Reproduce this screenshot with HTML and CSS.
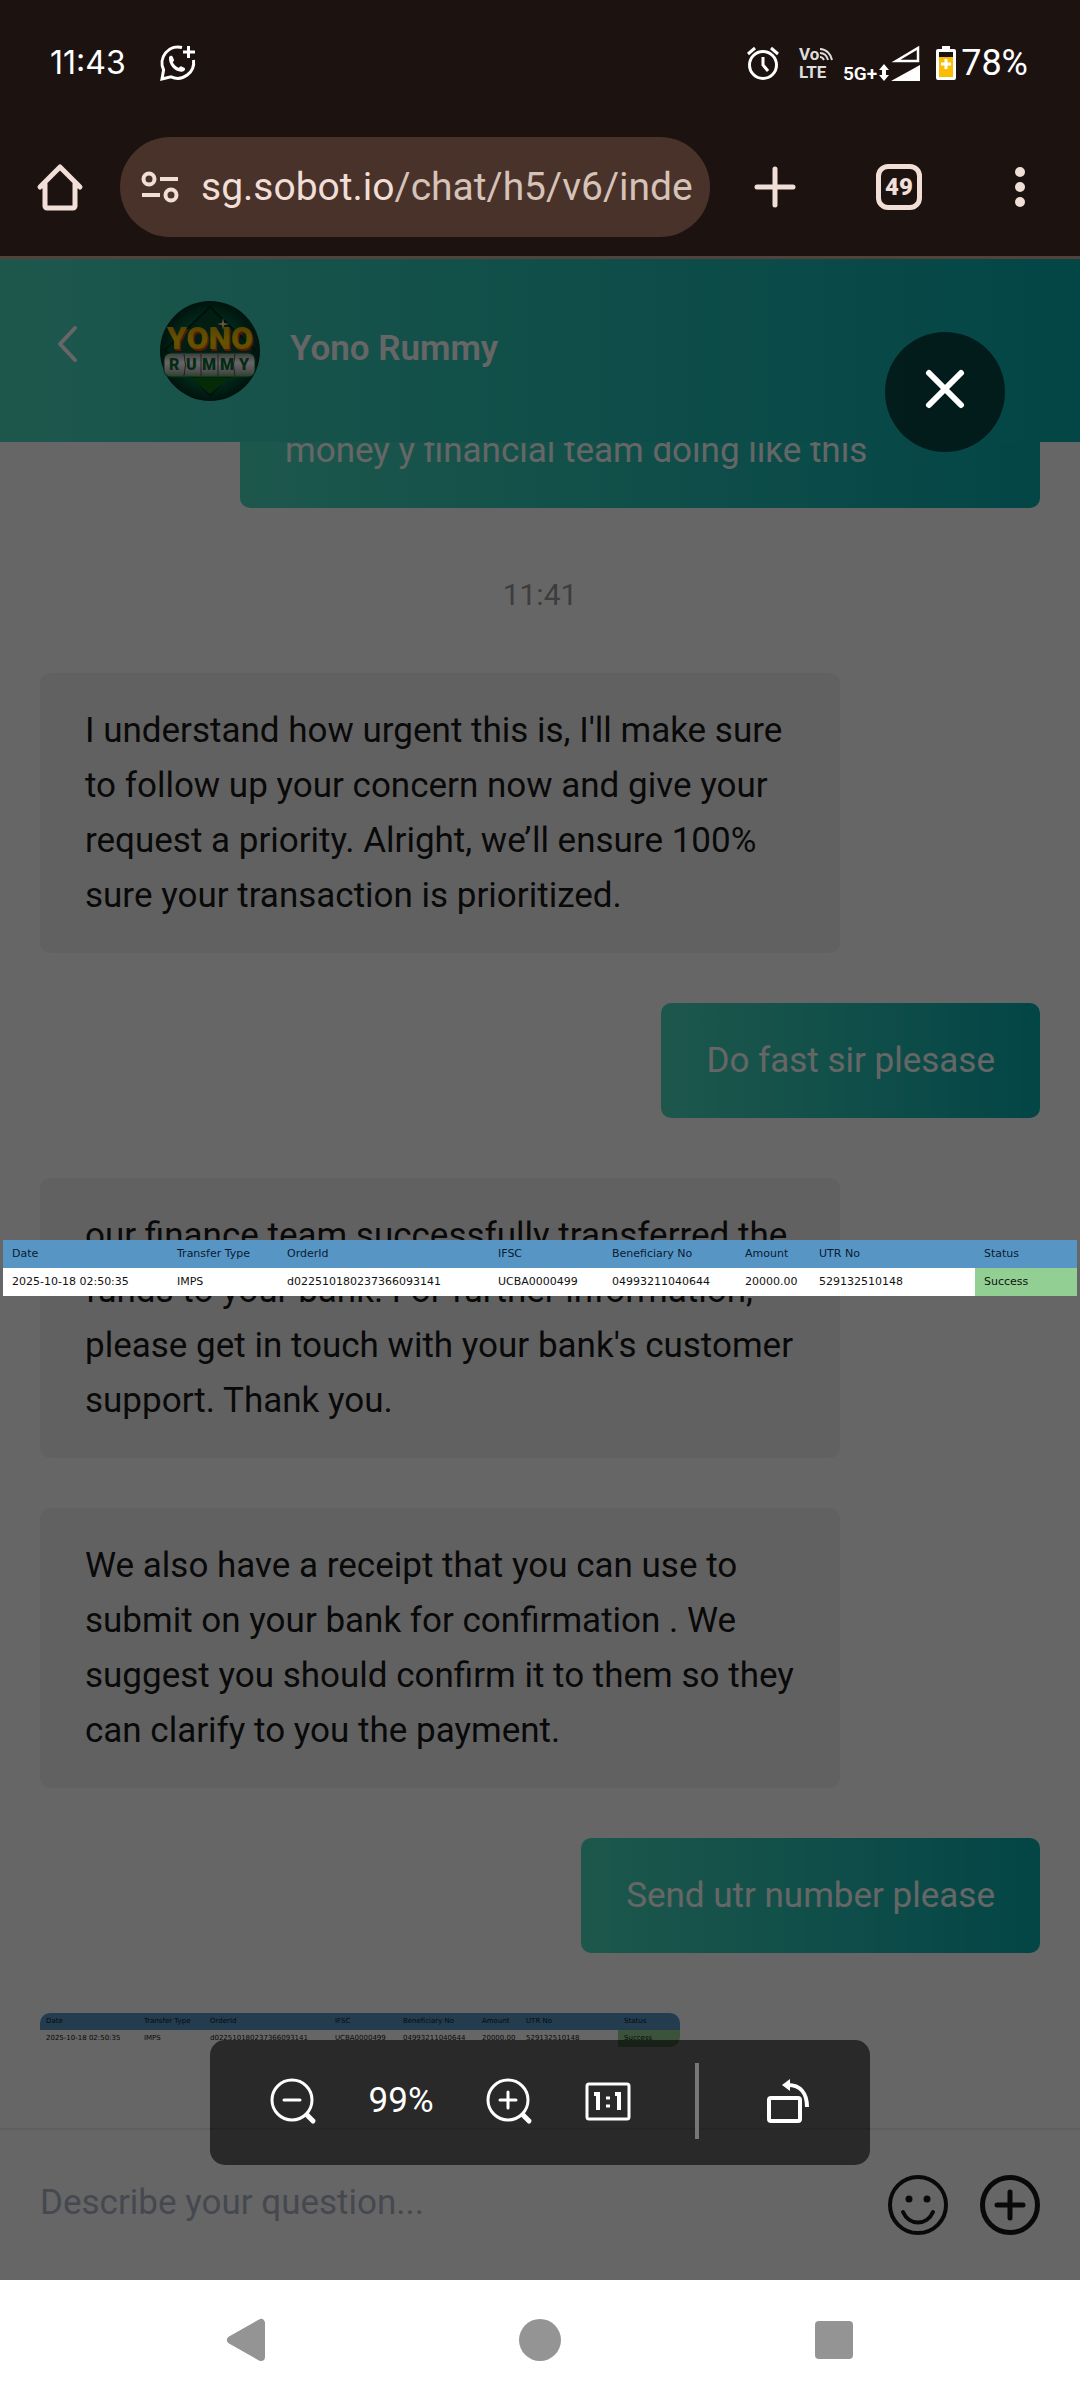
FILE: index.html
```html
<!DOCTYPE html>
<html lang="en">

<head>
    <meta charset="UTF-8">
    <meta name="viewport" content="width=device-width, initial-scale=1.0">
    <title>Yono Rummy</title>
    <link rel="stylesheet" href="styles.css">
</head>

<body>
    <div class="status">
        <span class="clock">11:43</span>
        <svg class="whatsapp" width="36" height="36" viewBox="0 0 36 36" fill="none" stroke="#fff" stroke-width="3">
            <path d="M22 2.500A16 16 0 0 0 3.600 25L2 34l9-2.200A16 16 0 0 0 33.500 15" />
            <path d="M28.500 1v12M23 7h12" />
            <path d="M9 12.500c.5-2 3-2.500 3.800-.6l1.200 3c.2 1-1 1.600-1.200 2.400 1.200 2.700 3.200 4.200 5.700 5.400 1-.3 1.500-1.700 2.600-1.500l3.200 1.500c1.600.9.700 3.300-1.600 3.800-6.700 1.500-14.500-6.500-13.700-14z" fill="#fff" stroke="none" />
        </svg>
        <div class="status-right">
            <svg width="32" height="34" viewBox="0 0 32 34" fill="none" stroke="#fff" stroke-width="3">
                <circle cx="16" cy="19" r="13.500" />
                <path d="M1 8l7-6M31 8l-7-6M16 11v8l5 6" />
            </svg>
            <svg class="volte" width="34" height="34" viewBox="0 0 34 34" fill="none" stroke="#ddd" stroke-width="2">
                <text x="0" y="14">Vo</text>
                <text x="0" y="32">LTE</text>
                <path d="M21 3c6 0 11 5 12 11M21 7c4 0 7 3 8 7M21 11c2 0 3 1 4 3" />
            </svg>
            <svg class="signal" width="78" height="38" viewBox="0 0 78 38" fill="#fff">
                <text x="0" y="36">5G+</text>
                <path d="M41 20l5 6h-3v5h3l-5 6-5-6h3v-5h-3z" />
                <path d="M53 17L75 4v13z" fill="none" stroke="#fff" stroke-width="2.500" />
                <path d="M48 37l29-16v16z" />
            </svg>
            <svg class="battery" width="20" height="34" viewBox="0 0 20 34">
                <path d="M6 0h8v3h4a2 2 0 0 1 2 2v27a2 2 0 0 1-2 2H2a2 2 0 0 1-2-2V5a2 2 0 0 1 2-2h4z" fill="#fff" />
                <path d="M3 6h14v5H3z" fill="#1c1210" />
                <path d="M3 11h14v20H3z" fill="#fbbc04" />
                <path d="M10 13v10M5 18h10" stroke="#fff" stroke-width="3" />
            </svg>
            <span class="percent">78%</span>
        </div>
    </div>

    <div class="browser">
        <button aria-label="Home">
            <svg width="46" height="48" viewBox="0 0 46 48" fill="none" stroke="#f0ded7" stroke-width="5" stroke-linejoin="round" stroke-linecap="round">
                <path d="M3 24L23 4l20 20M8 21v22a2 2 0 0 0 2 2h26a2 2 0 0 0 2-2V21" />
            </svg>
        </button>
        <a class="url" href="#">
            <svg width="38" height="34" viewBox="0 0 38 34" fill="none" stroke="#f0ded7" stroke-width="4">
                <circle cx="8" cy="9" r="5.500" />
                <circle cx="30" cy="25" r="5.500" />
                <path d="M19 9h18M1 25h18" />
            </svg>
            <span>sg.sobot.io<span class="path">/chat/h5/v6/inde</span></span>
        </a>
        <div class="actions">
            <button aria-label="New tab">
                <svg width="46" height="46" viewBox="0 0 46 46" stroke="#f0ded7" stroke-width="5" stroke-linecap="round">
                    <path d="M23 5v36M5 23h36" />
                </svg>
            </button>
            <button class="tabs">49</button>
            <button aria-label="Menu">
                <svg width="40" height="46" viewBox="0 0 40 46" fill="#f0ded7">
                    <circle cx="20" cy="8" r="5" />
                    <circle cx="20" cy="23" r="5" />
                    <circle cx="20" cy="38" r="5" />
                </svg>
            </button>
        </div>
    </div>

    <div class="page">
        <div class="header">
            <button class="back" aria-label="Back">
                <svg width="20" height="36" viewBox="0 0 20 36" fill="none" stroke="#fff" stroke-width="4" stroke-linecap="round" stroke-linejoin="round">
                    <path d="M17 2L2 18l15 16" />
                </svg>
            </button>
            <svg class="avatar" width="100" height="100" viewBox="0 0 100 100">
                <defs>
                    <radialGradient id="green">
                        <stop offset="0" stop-color="#0a8a58" />
                        <stop offset=".7" stop-color="#04603f" />
                        <stop offset="1" stop-color="#02301f" />
                    </radialGradient>
                    <linearGradient id="reel" x2="0" y2="1">
                        <stop offset="0" stop-color="#999" />
                        <stop offset=".4" stop-color="#fff" />
                        <stop offset=".8" stop-color="#bbb" />
                        <stop offset="1" stop-color="#4fa84f" />
                    </linearGradient>
                    <linearGradient id="gold" x2="0" y2="1">
                        <stop offset="0" stop-color="#c89a00" />
                        <stop offset=".6" stop-color="#ffd000" />
                        <stop offset="1" stop-color="#ffa000" />
                    </linearGradient>
                </defs>
                <circle cx="50" cy="50" r="50" fill="url(#green)" />
                <path d="M50 6l45 43-45 45L5 49z" fill="#054a2c" stroke="#022a1c" stroke-width="2" />
                <path d="M30 77h40L50 93z" fill="#0b6a14" />
                <rect x="4" y="52" width="91" height="24" rx="7" fill="url(#reel)" stroke="#0a6b35" />
                <path d="M24 53q3 11 0 22M41 53v22M58 53v22M75 53q-3 11 0 22" stroke="#555" fill="none" />
                <text class="yono shade" x="51" y="50">YONO</text>
                <text class="yono" x="50" y="48">YONO</text>
                <path d="M63 17l1 5 5 1-5 1-1 5-1-5-5-1 5-1z" fill="#ffe9a0" />
                <text class="rummy" x="9" y="69">R</text>
                <text class="rummy" x="26" y="69">U</text>
                <text class="rummy" x="42" y="69">M</text>
                <text class="rummy" x="60" y="69">M</text>
                <text class="rummy" x="79" y="69">Y</text>
            </svg>
            <h1>Yono Rummy</h1>
        </div>

        <div class="chat">
            <div class="msg me clipped">money y financial team doing like this</div>
            <div class="time">11:41</div>
            <div class="msg">I understand how urgent this is, I'll make sure to follow up your concern now and give your request a priority. Alright, we’ll ensure 100% sure your transaction is prioritized.</div>
            <div class="msg me">Do fast sir plesase</div>
            <div class="msg">our finance team successfully transferred the funds to your bank. For further information, please get in touch with your bank's customer support. Thank you.</div>
            <div class="msg">We also have a receipt that you can use to submit on your bank for confirmation . We suggest you should confirm it to them so they can clarify to you the payment.</div>
            <div class="msg me">Send utr number please</div>
            <table class="receipt thumb">
                <colgroup><col class="c1"><col class="c2"><col class="c3"><col class="c4"><col class="c5"><col class="c6"><col class="c7"><col class="c8"></colgroup>
                <tr><th>Date</th><th>Transfer Type</th><th>OrderId</th><th>IFSC</th><th>Beneficiary No</th><th>Amount</th><th>UTR No</th><th>Status</th></tr>
                <tr><td>2025-10-18 02:50:35</td><td>IMPS</td><td>d022510180237366093141</td><td>UCBA0000499</td><td>04993211040644</td><td>20000.00</td><td>529132510148</td><td class="ok">Success</td></tr>
            </table>
        </div>

        <form class="compose">
            <input type="text" placeholder="Describe your question..." aria-label="Describe your question">
            <button type="button" aria-label="Emoji">
                <svg width="60" height="60" viewBox="0 0 60 60" fill="none" stroke="#171717" stroke-width="4" stroke-linecap="round">
                    <circle cx="30" cy="30" r="28" />
                    <path d="M15 37c6 14 24 14 30 0" />
                    <circle cx="21" cy="24" r="3.500" fill="#171717" stroke="none" />
                    <circle cx="39" cy="24" r="3.500" fill="#171717" stroke="none" />
                </svg>
            </button>
            <button type="button" aria-label="More">
                <svg width="60" height="60" viewBox="0 0 60 60" fill="none" stroke="#171717" stroke-width="5" stroke-linecap="round">
                    <circle cx="30" cy="30" r="27.500" />
                    <path d="M30 17v26M17 30h26" />
                </svg>
            </button>
        </form>

        <!-- image viewer -->
        <div class="viewer">
            <button class="close" aria-label="Close">
                <svg width="44" height="44" viewBox="0 0 44 44" stroke="#fff" stroke-width="6" stroke-linecap="round">
                    <path d="M6 6l32 32M38 6L6 38" />
                </svg>
            </button>
            <table class="receipt">
                <colgroup><col class="c1"><col class="c2"><col class="c3"><col class="c4"><col class="c5"><col class="c6"><col class="c7"><col class="c8"></colgroup>
                <tr><th>Date</th><th>Transfer Type</th><th>OrderId</th><th>IFSC</th><th>Beneficiary No</th><th>Amount</th><th>UTR No</th><th>Status</th></tr>
                <tr><td>2025-10-18 02:50:35</td><td>IMPS</td><td>d022510180237366093141</td><td>UCBA0000499</td><td>04993211040644</td><td>20000.00</td><td>529132510148</td><td class="ok">Success</td></tr>
            </table>
            <div class="tools">
                <button aria-label="Zoom out">
                    <svg width="46" height="46" viewBox="0 0 46 46" fill="none" stroke="#fff" stroke-width="3" stroke-linecap="round">
                        <circle cx="22" cy="22" r="20" />
                        <path d="M14 22h16" />
                        <path d="M37 37l6 6" stroke-width="5" />
                    </svg>
                </button>
                <span class="zoom">99%</span>
                <button aria-label="Zoom in">
                    <svg width="46" height="46" viewBox="0 0 46 46" fill="none" stroke="#fff" stroke-width="3" stroke-linecap="round">
                        <circle cx="22" cy="22" r="20" />
                        <path d="M14 22h16M22 14v16" />
                        <path d="M37 37l6 6" stroke-width="5" />
                    </svg>
                </button>
                <button class="actual" aria-label="Actual size">
                    <svg width="46" height="46" viewBox="0 0 46 46" fill="none" stroke="#fff">
                        <rect x="2" y="6" width="42" height="35" rx="2" stroke-width="3" />
                        <path d="M9 16h4v16M30 16h4v16" stroke-width="4" />
                        <path d="M21 20h4M21 28h4" stroke-width="3" />
                    </svg>
                </button>
                <span class="line"></span>
                <button aria-label="Rotate">
                    <svg width="46" height="46" viewBox="0 0 46 46" fill="none" stroke="#fff" stroke-width="4">
                        <rect x="3" y="20" width="31" height="23" rx="2" />
                        <path d="M22 7c12 0 19 8 19 22" />
                        <path d="M16 7l8-6v12z" fill="#fff" stroke="none" />
                    </svg>
                </button>
            </div>
        </div>
    </div>

    <div class="nav">
        <button aria-label="Back">
            <svg width="42" height="42" viewBox="0 0 42 42" fill="#949494" stroke="#949494" stroke-width="8" stroke-linejoin="round">
                <path d="M6 21L36 4v34z" />
            </svg>
        </button>
        <button aria-label="Home">
            <svg width="42" height="42" viewBox="0 0 42 42" fill="#949494">
                <circle cx="21" cy="21" r="21" />
            </svg>
        </button>
        <button aria-label="Recent">
            <svg width="42" height="42" viewBox="0 0 42 42" fill="#949494">
                <rect x="2" y="2" width="38" height="38" rx="4" />
            </svg>
        </button>
    </div>
</body>

</html>
```
FILE: styles.css
```css
* {
    box-sizing: border-box;
}

body {
    margin: 0;
    min-height: 100vh;
    display: flex;
    flex-direction: column;
    font-family: Roboto, "Liberation Sans", sans-serif;
    font-size: 35px;
    background: #fff;
}

button {
    padding: 0;
    border: 0;
    background: none;
    font-family: inherit;
}

svg {
    display: block;
    flex-shrink: 0;
    overflow: visible;
}

.status {
    height: 125px;
    padding: 0 52px 0 50px;
    display: flex;
    align-items: center;
    background: #1c1210;
    color: #fff;
}

.clock {
    font-family: Inter, sans-serif;
    font-size: 32px;
}

.whatsapp {
    margin-left: 34px;
}

.status-right {
    margin-left: auto;
    display: flex;
    align-items: center;
}

.volte {
    margin: 0 10px 0 20px;
}

.volte text {
    font-size: 17px;
    font-weight: bold;
    fill: #ddd;
    stroke: none;
}

.signal text {
    font-size: 19px;
    font-weight: 600;
}

.battery {
    margin: 0 5px 0 15px;
}

.percent {
    font-size: 36px;
}

.browser {
    height: 134px;
    padding: 12px 40px 19px 37px;
    border-bottom: 3px solid #52423b;
    display: flex;
    align-items: center;
    background: #1c1210;
}

.url {
    flex: 1;
    min-width: 0;
    height: 100px;
    margin: 0 42px 0 37px;
    padding: 0 19px 0 21px;
    display: flex;
    align-items: center;
    gap: 22px;
    border-radius: 50px;
    background: #493229;
    color: #f0ded7;
    font-size: 39px;
    white-space: nowrap;
    text-decoration: none;
}

.path {
    color: #d5c2b8;
}

.actions {
    display: flex;
    align-items: center;
    gap: 78px;
}

.tabs {
    width: 46px;
    height: 46px;
    border: 5px solid #f0ded7;
    border-radius: 12px;
    color: #f0ded7;
    font-size: 24px;
    font-weight: 900;
}

.page {
    position: relative;
    flex: 1;
    display: flex;
    flex-direction: column;
}

.header {
    height: 183px;
    padding-left: 58px;
    display: flex;
    align-items: center;
    background: linear-gradient(90deg, #4adabe, #09aeb0);
    color: #fff;
}

.back {
    margin-bottom: 14px;
}

.avatar {
    margin: 0 30px 0 82px;
}

.yono {
    font-size: 32px;
    font-weight: 900;
    text-anchor: middle;
    fill: url(#gold);
}

.shade {
    fill: #e04008;
}

.rummy {
    font-size: 16px;
    font-weight: 900;
    fill: #0a6b35;
}

h1 {
    margin: 0 0 4px;
    font-size: 35px;
    font-weight: 600;
}

.chat {
    flex: 1;
    padding: 0 40px;
    display: flex;
    flex-direction: column;
    align-items: flex-start;
}

.msg {
    max-width: 80%;
    margin-bottom: 50px;
    padding: 30px 45px;
    border-radius: 10px;
    background: #f3f3f3;
    color: #171717;
    line-height: 55px;
}

.me {
    align-self: flex-end;
    margin-bottom: 60px;
    background: linear-gradient(90deg, #4adabe, #09aeb0);
    color: #fff;
}

/* scrolled under the header */
.clipped {
    width: 80%;
    height: 66px;
    padding-top: 0;
    border-radius: 0 0 10px 10px;
    overflow: hidden;
    display: flex;
    align-items: flex-end;
}

.time {
    align-self: center;
    margin-bottom: 52px;
    color: #999;
    font-size: 30px;
    line-height: 53px;
}

.receipt {
    width: 100%;
    table-layout: fixed;
    border-spacing: 0;
    background: #fff;
    color: #111;
    font-family: "DejaVu Sans", sans-serif;
    font-size: 11px;
    line-height: 28px;
    text-align: left;
    white-space: nowrap;
}

.receipt th,
.receipt td {
    padding: 0 0 0 9px;
    font-weight: normal;
}

.receipt th {
    background: #5796c4;
    color: #0a1a33;
}

.receipt .ok {
    background: #92cf92;
}

.c1,
.c7 {
    width: 165px;
}

.c2 {
    width: 110px;
}

.c3 {
    width: 211px;
}

.c4 {
    width: 114px;
}

.c5 {
    width: 133px;
}

.c6 {
    width: 74px;
}

.c8 {
    width: 102px;
}

.thumb {
    width: 64%;
    border-radius: 10px;
    overflow: hidden;
    font-size: 7px;
    line-height: 17px;
}

.thumb th,
.thumb td {
    padding-left: 6px;
}

.thumb .c1,
.thumb .c7 {
    width: 98px;
}

.thumb .c2 {
    width: 66px;
}

.thumb .c3 {
    width: 125px;
}

.thumb .c4 {
    width: 68px;
}

.thumb .c5 {
    width: 79px;
}

.thumb .c6 {
    width: 44px;
}

.thumb .c8 {
    width: 62px;
}

.compose {
    height: 152px;
    padding: 0 40px;
    border-top: 2px solid #ebebeb;
    display: flex;
    align-items: center;
    gap: 32px;
}

.compose input {
    flex: 1;
    min-width: 0;
    padding: 0 0 5px;
    border: 0;
    background: none;
    font: inherit;
}

.compose input::placeholder {
    color: #afb5c8;
}

.viewer {
    position: absolute;
    top: 0;
    right: 0;
    bottom: 0;
    left: 0;
    padding: 0 3px 3px;
    display: flex;
    align-items: center;
    background: rgba(0, 0, 0, .6);
}

.close {
    position: absolute;
    top: 73px;
    right: 75px;
    width: 120px;
    height: 120px;
    padding: 0 0 7px;
    display: flex;
    align-items: center;
    justify-content: center;
    border-radius: 50%;
    background: rgba(0, 0, 0, .6);
}

.tools {
    position: absolute;
    left: 50%;
    bottom: 115px;
    width: 660px;
    height: 125px;
    margin-left: -330px;
    padding: 0 58px 4px 60px;
    display: flex;
    align-items: center;
    justify-content: space-between;
    border-radius: 15px;
    background: rgba(0, 0, 0, .6);
    color: #fff;
}

.line {
    width: 4px;
    height: 76px;
    margin: 0 14px 0 12px;
    background: #777;
}

.nav {
    height: 120px;
    display: flex;
    align-items: center;
    justify-content: center;
    gap: 252px;
    background: #fff;
}
```
